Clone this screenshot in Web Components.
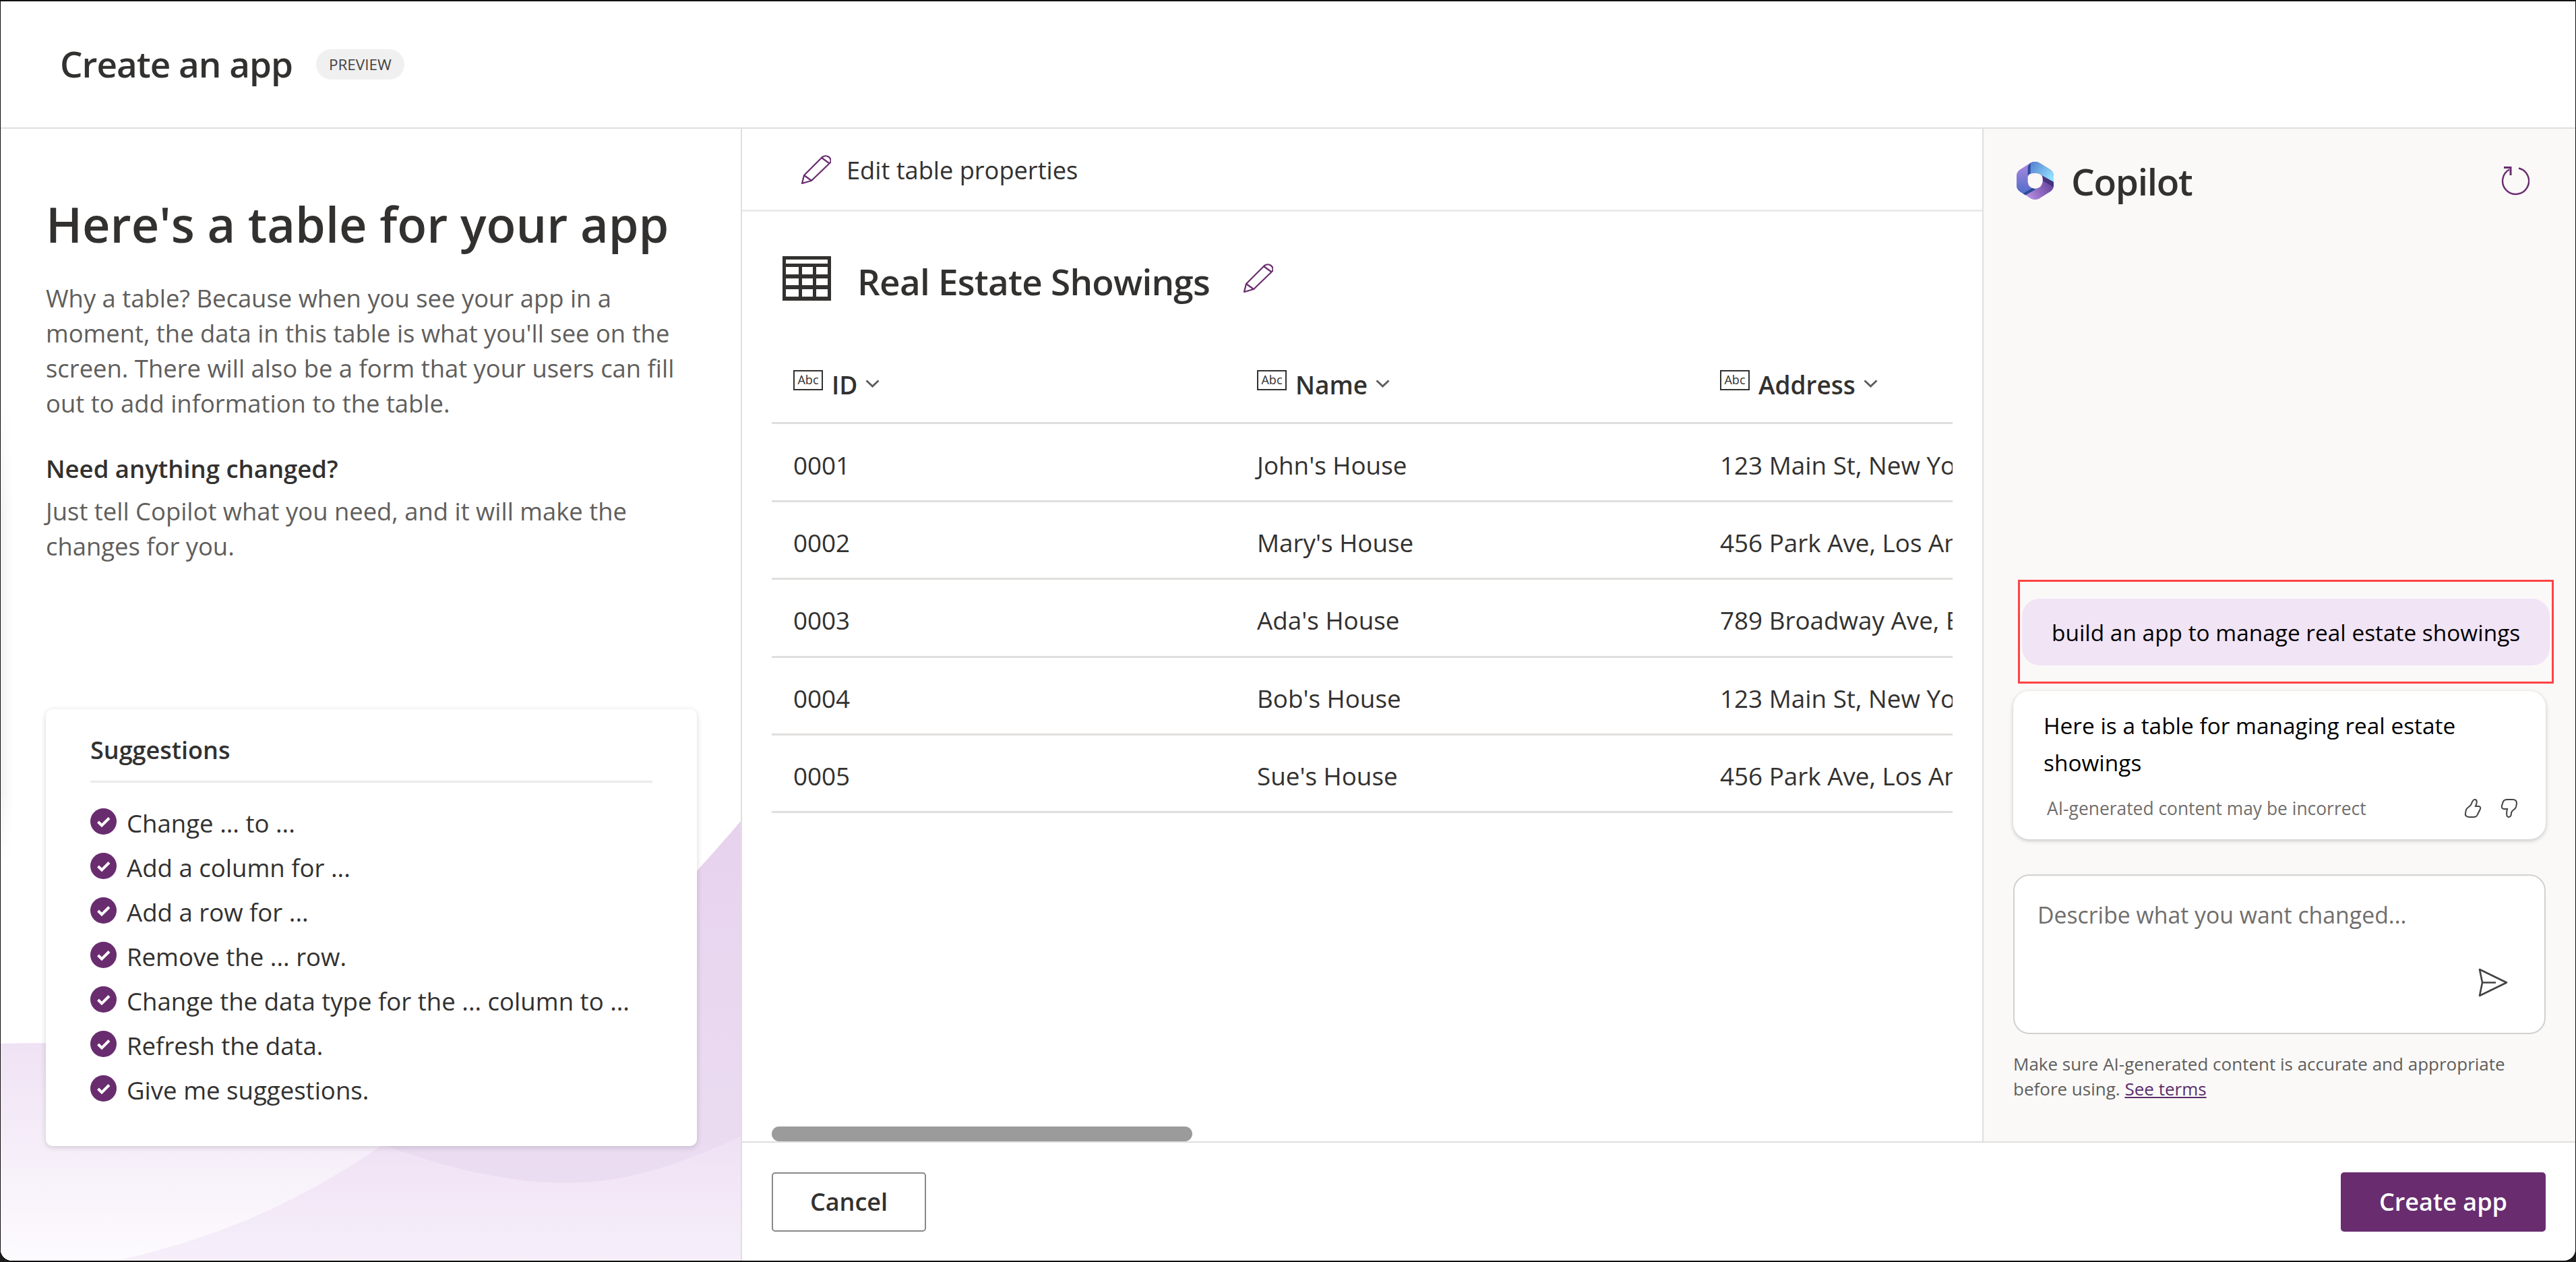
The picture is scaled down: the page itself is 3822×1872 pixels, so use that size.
<!DOCTYPE html>
<html lang="en">
<head>
<meta charset="utf-8">
<title>Create an app</title>
<style>
    html, body { margin: 0; padding: 0; background: #1c1c1c; }
    body { width: 3822px; height: 1872px; overflow: hidden; font-family: "Open Sans", "Noto Sans", sans-serif; color: #323130; }
</style>
</head>
<body>
<app-shell>
    <app-header slot="header" heading="Create an app" badge="PREVIEW"></app-header>
    <intro-panel slot="left">
        <suggestion-item>Change ... to ...</suggestion-item>
        <suggestion-item>Add a column for ...</suggestion-item>
        <suggestion-item>Add a row for ...</suggestion-item>
        <suggestion-item>Remove the ... row.</suggestion-item>
        <suggestion-item>Change the data type for the ... column to ...</suggestion-item>
        <suggestion-item>Refresh the data.</suggestion-item>
        <suggestion-item>Give me suggestions.</suggestion-item>
    </intro-panel>
    <table-pane slot="table"></table-pane>
    <copilot-pane slot="copilot"></copilot-pane>
    <footer-bar slot="footer"></footer-bar>
</app-shell>

<script>
const PENCIL = `<path d="M1 42 4 30 31 3Q36-.5 41 3 45 7 43 11L15 38ZM4 30 15 38M30 4 41 12" fill="none" stroke="#692d6f" stroke-width="2.2" stroke-linejoin="round"/>`;

class AppShell extends HTMLElement {
    constructor() {
        super();
        this.attachShadow({ mode: 'open' });
        this.shadowRoot.innerHTML = `
            <style>
                :host {
                    display: grid;
                    grid-template-columns: 1100px minmax(0, 1fr);
                    grid-template-rows: 187px minmax(0, 1fr) auto;
                    box-sizing: border-box;
                    width: 3822px;
                    height: 1872px;
                    background: #fff;
                    border: solid #111;
                    border-width: 2px 1px 2px 1px;
                    border-radius: 0 0 18px 18px;
                    overflow: hidden;
                }
                .head { grid-column: 1 / 3; display: block; }
                .left { grid-row: 2 / 4; display: block; min-height: 0; }
                .mid { display: flex; min-height: 0; min-width: 0; }
            </style>
            <div class="head"><slot name="header"></slot></div>
            <div class="left"><slot name="left"></slot></div>
            <div class="mid"><slot name="table"></slot><slot name="copilot"></slot></div>
            <div><slot name="footer"></slot></div>
        `;
    }
}

class AppHeader extends HTMLElement {
    constructor() {
        super();
        this.attachShadow({ mode: 'open' });
    }
    connectedCallback() {
        this.shadowRoot.innerHTML = `
            <style>
                :host {
                    display: flex;
                    align-items: center;
                    box-sizing: border-box;
                    height: 187px;
                    padding: 0 0 0 88px;
                    gap: 35px;
                }
                h1 { margin: -3px 0 0; font-size: 53px; font-weight: 600; letter-spacing: -1px; line-height: 1; color: #323130; }
                .badge {
                    display: flex;
                    align-items: center;
                    height: 45px;
                    padding: 0 19px;
                    border-radius: 23px;
                    background: #f0f0f0;
                    font-size: 22.5px;
                    font-weight: 500;
                    color: #424242;
                }
            </style>
            <h1>${this.getAttribute('heading')}</h1>
            <span class="badge">${this.getAttribute('badge')}</span>
        `;
    }
}

class IntroPanel extends HTMLElement {
    constructor() {
        super();
        this.attachShadow({ mode: 'open' });
        this.shadowRoot.innerHTML = `
            <style>
                :host {
                    display: flex;
                    flex-direction: column;
                    position: relative;
                    box-sizing: border-box;
                    height: 100%;
                    padding: 0 65px 170px 67px;
                    border-top: 2px solid #e1dfdd;
                    border-right: 2px solid #e1dfdd;
                    background: #fff;
                    overflow: hidden;
                }
                .waves { position: absolute; left: 0; bottom: 0; width: 1098px; height: 660px; }
                .edge {
                    position: absolute;
                    left: 0;
                    top: 400px;
                    width: 18px;
                    height: 690px;
                    background: linear-gradient(to right, #f1f1f1, #fff);
                    -webkit-mask-image: linear-gradient(to bottom, transparent, #000 25%, #000 85%, transparent);
                }
                .copy { position: relative; }
                h2 { margin: 93px 0 0; font-size: 72px; font-weight: 600; line-height: 96px; color: #323130; }
                p { margin: 0; font-size: 36.4px; line-height: 52px; color: #605e5c; }
                .lead { margin-top: 36px; }
                h3 { margin: 45px 0 11px; font-size: 36.5px; font-weight: 600; line-height: 52px; color: #323130; }
                suggestions-card { margin-top: auto; position: relative; }
            </style>
            <div class="edge"></div>
            <svg class="waves" viewBox="0 0 1098 660" preserveAspectRatio="none" aria-hidden="true">
                <defs>
                    <linearGradient id="soft" x1="0" y1="0" x2="0" y2="1">
                        <stop offset="0" stop-color="#efe2f4"/>
                        <stop offset="1" stop-color="#fdfbfe"/>
                    </linearGradient>
                    <linearGradient id="deep" x1="0" y1="0" x2="0" y2="1">
                        <stop offset="0" stop-color="#e7d2ee"/>
                        <stop offset="1" stop-color="#ecdff2"/>
                    </linearGradient>
                    <linearGradient id="low" x1="0" y1="0" x2="0" y2="1">
                        <stop offset="0" stop-color="#efe1f4"/>
                        <stop offset="1" stop-color="#f6effa"/>
                    </linearGradient>
                </defs>
                <path d="M0 338C60 336 120 338 200 340L567 490 567 660 0 660Z" fill="url(#soft)"/>
                <path d="M1098 8C900 240 740 360 567 488 420 590 300 630 175 660H1098Z" fill="url(#deep)"/>
                <path d="M567 488C680 530 780 548 860 544 950 540 1020 510 1098 476V660H175C300 630 420 590 567 488Z" fill="url(#low)"/>
            </svg>
            <div class="copy">
                <h2>Here's a table for your app</h2>
                <p class="lead">Why a table? Because when you see your app in a moment, the data in this table is what you'll see on the screen. There will also be a form that your users can fill out to add information to the table.</p>
                <h3>Need anything changed?</h3>
                <p>Just tell Copilot what you need, and it will make the changes for you.</p>
            </div>
            <suggestions-card><slot></slot></suggestions-card>
        `;
    }
}

class SuggestionsCard extends HTMLElement {
    constructor() {
        super();
        this.attachShadow({ mode: 'open' });
        this.shadowRoot.innerHTML = `
            <style>
                :host {
                    display: block;
                    box-sizing: border-box;
                    height: 648px;
                    padding: 36px 66px 0;
                    background: #fff;
                    border-radius: 10px;
                    box-shadow: 0 2px 8px rgba(0,0,0,.16);
                }
                .title {
                    font-size: 36px;
                    font-weight: 600;
                    line-height: 50px;
                    padding-bottom: 20px;
                    border-bottom: 3px solid #edebe9;
                    color: #323130;
                }
                .list { display: flex; flex-direction: column; gap: 16px; margin-top: 35px; }
            </style>
            <div class="title">Suggestions</div>
            <div class="list"><slot></slot></div>
        `;
    }
}

class SuggestionItem extends HTMLElement {
    constructor() {
        super();
        this.attachShadow({ mode: 'open' });
        this.shadowRoot.innerHTML = `
            <style>
                :host { display: flex; align-items: center; gap: 15px; height: 50px; font-size: 36.6px; color: #323130; }
                svg { width: 39px; height: 39px; flex: none; margin-top: -6px; }
            </style>
            <svg viewBox="0 0 39 39" aria-hidden="true">
                <circle cx="19.5" cy="19.5" r="19.5" fill="#692d6f"/>
                <path d="M11.5 20 17 25.5 28 14.5" fill="none" stroke="#fff" stroke-width="4"/>
            </svg>
            <span><slot></slot></span>
        `;
    }
}

class TablePane extends HTMLElement {
    constructor() {
        super();
        this.attachShadow({ mode: 'open' });
        this.shadowRoot.innerHTML = `
            <style>
                :host {
                    display: flex;
                    flex-direction: column;
                    box-sizing: border-box;
                    width: 1840px;
                    flex: none;
                    height: 100%;
                    border-top: 2px solid #e1dfdd;
                }
                .tools {
                    display: flex;
                    align-items: center;
                    gap: 23px;
                    height: 120px;
                    flex: none;
                    padding-left: 88px;
                    border-bottom: 3px solid #edebe9;
                    font-size: 36.2px;
                    color: #323130;
                }
                .tools span { margin-top: 2px; }
                .tools svg { width: 44px; height: 43px; }
                .name {
                    display: flex;
                    align-items: center;
                    height: 198px;
                    flex: none;
                    padding-left: 60px;
                    font-size: 53px;
                    font-weight: 600;
                    letter-spacing: -.75px;
                }
                .name span { margin-top: 8px; }
                .name .grid { width: 72px; height: 66px; margin-right: 39px; }
                .name .edit { width: 44px; height: 43px; margin-left: 50px; margin-top: -2px; }
                .scroll {
                    width: 624px;
                    height: 22px;
                    margin: auto 0 0 44px;
                    border-radius: 11px;
                    background: #9b9b9b;
                    flex: none;
                }
                data-table { margin: 2px 0 0 44px; }
            </style>
            <div class="tools"><svg viewBox="0 0 44 43" aria-hidden="true">${PENCIL}</svg><span>Edit table properties</span></div>
            <div class="name">
                <svg class="grid" viewBox="0 0 72 66" aria-hidden="true">
                    <rect width="72" height="66" fill="#323130"/>
                    <g fill="#fff">
                        <rect x="5" y="5" width="62" height="6"/>
                        <rect x="5" y="16" width="19" height="11"/><rect x="29" y="16" width="16" height="11"/><rect x="50" y="16" width="17" height="11"/>
                        <rect x="5" y="33" width="19" height="10"/><rect x="29" y="33" width="16" height="10"/><rect x="50" y="33" width="17" height="10"/>
                        <rect x="5" y="49" width="19" height="11"/><rect x="29" y="49" width="16" height="11"/><rect x="50" y="49" width="17" height="11"/>
                    </g>
                </svg>
                <span>Real Estate Showings</span>
                <svg class="edit" viewBox="0 0 44 43" aria-hidden="true">${PENCIL}</svg>
            </div>
            <data-table></data-table>
            <div class="scroll"></div>
        `;
    }
}

const SHOWINGS = [
    ['0001', "John's House", '123 Main St, New York'],
    ['0002', "Mary's House", '456 Park Ave, Los Angeles'],
    ['0003', "Ada's House", '789 Broadway Ave, Boston'],
    ['0004', "Bob's House", '123 Main St, New York'],
    ['0005', "Sue's House", '456 Park Ave, Los Angeles']
];

class DataTable extends HTMLElement {
    constructor() {
        super();
        this.attachShadow({ mode: 'open' });
    }
    connectedCallback() {
        const head = ['ID', 'Name', 'Address'].map(label => `
            <div class="th">
                <span class="abc">Abc</span><span class="label">${label}</span>
                <svg viewBox="0 0 21 12" aria-hidden="true"><path d="M1.5 1.5 10.5 10 19.5 1.5" fill="none" stroke="#605e5c" stroke-width="3"/></svg>
            </div>`).join('');
        const rows = SHOWINGS.map(row => `
            <div class="row">${row.map(cell => `<div class="td">${cell}</div>`).join('')}</div>`).join('');
        this.shadowRoot.innerHTML = `
            <style>
                :host { display: block; width: 1752px; overflow: hidden; font-size: 36.8px; color: #323130; }
                .row { display: grid; grid-template-columns: 688px 687px 377px; box-sizing: border-box; height: 115.4px; border-bottom: 3px solid #e1dfdd; align-items: center; }
                .td, .th { padding-left: 32px; white-space: nowrap; overflow: hidden; }
                .td { margin-top: 8px; }
                .th { display: flex; align-items: center; font-weight: 600; font-size: 37px; }
                .abc {
                    box-sizing: border-box;
                    width: 44px;
                    height: 30px;
                    margin: -12px 13px 0 0;
                    border: 2.5px solid #323130;
                    font-size: 18px;
                    font-weight: 400;
                    line-height: 24px;
                    text-align: center;
                }
                .th svg { width: 21px; height: 12px; margin: -2px 0 0 12px; }
            </style>
            <div class="row top">${head}</div>
            ${rows}
        `;
    }
}

class CopilotPane extends HTMLElement {
    constructor() {
        super();
        this.attachShadow({ mode: 'open' });
        this.shadowRoot.innerHTML = `
            <style>
                :host {
                    display: flex;
                    flex-direction: column;
                    flex: 1;
                    min-width: 0;
                    box-sizing: border-box;
                    height: 100%;
                    padding: 0 44px;
                    background: #faf9f8;
                    border-left: 2px solid #e1dfdd;
                    border-top: 2px solid #e1dfdd;
                }
                .top { display: flex; align-items: center; height: 106px; margin-top: 24px; flex: none; }
                .logo { width: 55px; height: 58px; margin: 0 26px 0 5px; }
                .brand { font-size: 55px; font-weight: 600; letter-spacing: -1.3px; color: #323130; }
                .reset { width: 43px; height: 43px; margin-left: auto; margin-right: 24px; }
                chat-prompt { margin-top: auto; }
                response-card { margin-top: 11px; }
                prompt-box { margin-top: 52px; }
                .note { margin: 26px 0 0; font-size: 26px; line-height: 37px; color: #605e5c; padding-bottom: 59px; }
                .note a { color: #5c2e6b; text-decoration: underline; }
            </style>
            <div class="top">
                <svg class="logo" viewBox="0 0 165 173" aria-hidden="true">
                    <defs>
                        <linearGradient id="cpA" x1="0" y1="0" x2="0" y2="1"><stop offset="0" stop-color="#b58be2"/><stop offset="1" stop-color="#4a6cc8"/></linearGradient>
                        <linearGradient id="cpB" x1="0" y1="0" x2="1" y2=".6"><stop offset="0" stop-color="#4c74cc"/><stop offset="1" stop-color="#93e2ff"/></linearGradient>
                        <linearGradient id="cpC" x1="0" y1=".8" x2="1" y2=".3"><stop offset="0" stop-color="#d0a8f5"/><stop offset=".55" stop-color="#8a64bd"/><stop offset="1" stop-color="#55388c"/></linearGradient>
                        <clipPath id="hex"><path d="M62 8Q82-4 102 8L150 38Q165 48 165 65V108Q165 125 150 135L102 165Q82 177 62 165L15 135Q0 125 0 108V65Q0 48 15 38Z"/></clipPath>
                    </defs>
                    <g clip-path="url(#hex)">
                        <rect width="165" height="173" fill="url(#cpC)"/>
                        <path d="M-5-5H60L50 60V95Q52 115 70 120L22 150H-5Z" fill="url(#cpA)"/>
                        <path d="M60 0H170V95L115 65Q100 52 82 52 62 52 50 66Z" fill="url(#cpB)"/>
                        <path d="M62 5V55Q54 58 50 66V24Z" fill="#2f4a9a"/>
                        <path d="M22 148 72 118 84 126 34 154Z" fill="#2b4a96"/>
                        <path d="M115 65 170 95V118L118 88Z" fill="#3e2f78" opacity=".85"/>
                        <path d="M50 70Q52 54 82 53 113 54 116 75V90Q114 118 82 122 52 118 50 92Z" fill="#faf9f8"/>
                    </g>
                </svg>
                <span class="brand">Copilot</span>
                <svg class="reset" viewBox="0 0 43 43" aria-hidden="true">
                    <path d="M27 2.5A19.5 19.5 0 1 1 13 4.5" fill="none" stroke="#692d6f" stroke-width="2.4"/>
                    <path d="M5 1.5H15V13" fill="none" stroke="#692d6f" stroke-width="3"/>
                </svg>
            </div>
            <chat-prompt>build an app to manage real estate showings</chat-prompt>
            <response-card>Here is a table for managing real estate showings</response-card>
            <prompt-box placeholder="Describe what you want changed..."></prompt-box>
            <p class="note">Make sure AI-generated content is accurate and appropriate<br><span>before using.</span> <a>See terms</a></p>
        `;
    }
}

class ChatPrompt extends HTMLElement {
    constructor() {
        super();
        this.attachShadow({ mode: 'open' });
        this.shadowRoot.innerHTML = `
            <style>
                :host {
                    display: block;
                    box-sizing: border-box;
                    width: 795px;
                    height: 154px;
                    margin: 0 -12px 0 7px;
                    padding: 25px 3px 0;
                    border: 3px solid #ff4343;
                }
                .bubble {
                    display: flex;
                    align-items: center;
                    height: 99px;
                    padding-left: 44px;
                    border-radius: 26px;
                    background: #f1e4f5;
                    font-size: 33.4px;
                    color: #000;
                }
            </style>
            <div class="bubble"><slot></slot></div>
        `;
    }
}

class ResponseCard extends HTMLElement {
    constructor() {
        super();
        this.attachShadow({ mode: 'open' });
        this.shadowRoot.innerHTML = `
            <style>
                :host {
                    display: block;
                    box-sizing: border-box;
                    height: 220px;
                    padding: 24px 44px 0 45px;
                    background: #fff;
                    border-radius: 24px;
                    box-shadow: 0 2px 6px rgba(0,0,0,.22);
                }
                .text { font-size: 33.4px; line-height: 55px; color: #000; width: 640px; }
                .meta { display: flex; align-items: center; margin: 22px 0 0 5px; font-size: 26.4px; color: #706e6c; }
                .meta span { margin-right: auto; }
                svg { width: 26px; height: 28px; margin-left: 30px; }
            </style>
            <div class="text"><slot></slot></div>
            <div class="meta">
                <span>AI-generated content may be incorrect</span>
                <svg viewBox="0 0 26 28" aria-hidden="true"><path d="M16 1C13 1 12 4 11 7 10 11 5 12 3 16L2 21C1 25 4 27 8 27H14C17 27 19 26 20 23L24 15C25 12 23 11 21 11H17C19 7 20 1 16 1Z" fill="none" stroke="#424242" stroke-width="2"/></svg>
                <svg viewBox="0 0 26 28" aria-hidden="true" style="margin-left:28px;margin-right:-3px"><path d="M12 27C15 27 16 24 16 21 16 17 22 16 23 12L24 7C24 3 22 1 18 1H10C7 1 5 2 4 4L2 10C1 13 3 15 5 15H10C9 19 8 27 12 27Z" fill="none" stroke="#424242" stroke-width="2"/></svg>
            </div>
        `;
    }
}

class PromptBox extends HTMLElement {
    constructor() {
        super();
        this.attachShadow({ mode: 'open' });
    }
    connectedCallback() {
        this.shadowRoot.innerHTML = `
            <style>
                :host {
                    display: block;
                    position: relative;
                    box-sizing: border-box;
                    height: 237px;
                    padding: 35px 34px;
                    background: #fff;
                    border: 2.5px solid #d1d1d1;
                    border-radius: 24px;
                    font-size: 33.8px;
                    color: #706e6c;
                }
                svg { position: absolute; right: 54px; bottom: 53px; width: 44px; height: 43px; }
            </style>
            <span>${this.getAttribute('placeholder')}</span>
            <svg viewBox="0 0 44 43" aria-hidden="true"><path d="M2 2 42 21.5 2 41 6 21.5ZM6 21.5H26" fill="none" stroke="#424242" stroke-width="2.6" stroke-linejoin="round"/></svg>
        `;
    }
}

class FooterBar extends HTMLElement {
    constructor() {
        super();
        this.attachShadow({ mode: 'open' });
        this.shadowRoot.innerHTML = `
            <style>
                :host {
                    display: flex;
                    align-items: center;
                    justify-content: space-between;
                    box-sizing: border-box;
                    height: 177px;
                    padding: 0 44px;
                    border-top: 2px solid #e1dfdd;
                }
                .btn {
                    display: flex;
                    align-items: center;
                    justify-content: center;
                    box-sizing: border-box;
                    height: 88px;
                    border-radius: 5px;
                    font-size: 36px;
                    font-weight: 600;
                }
                .cancel { width: 229px; border: 2.5px solid #8a8886; color: #323130; background: #fff; }
                .create { width: 304px; background: #692d6f; color: #fff; }
            </style>
            <div class="btn cancel">Cancel</div>
            <div class="btn create">Create app</div>
        `;
    }
}

customElements.define('app-shell', AppShell);
customElements.define('app-header', AppHeader);
customElements.define('intro-panel', IntroPanel);
customElements.define('suggestions-card', SuggestionsCard);
customElements.define('suggestion-item', SuggestionItem);
customElements.define('table-pane', TablePane);
customElements.define('data-table', DataTable);
customElements.define('copilot-pane', CopilotPane);
customElements.define('chat-prompt', ChatPrompt);
customElements.define('response-card', ResponseCard);
customElements.define('prompt-box', PromptBox);
customElements.define('footer-bar', FooterBar);
</script>
</body>
</html>
